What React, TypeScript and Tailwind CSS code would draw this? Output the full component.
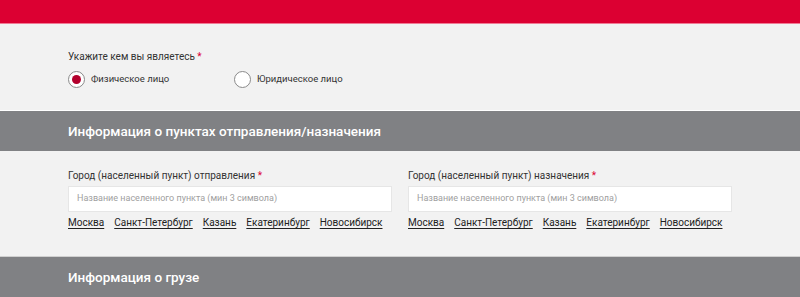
import React from "react";

const cities = ["Москва", "Санкт-Петербург", "Казань", "Екатеринбург", "Новосибирск"];

function CityField({ label }: { label: string }) {
  return (
    <div className="flex flex-col">
      <div className="text-[10px] leading-[14px] text-[#333333]">
        {label} <span className="text-[#dc0032]">*</span>
      </div>
      <div className="mt-[3px] h-[26px] bg-white border border-[#e6e6e6] flex items-center px-[8px]">
        <span className="text-[9px] text-[#a0a0a0] whitespace-nowrap">Название населенного пункта (мин 3 символа)</span>
      </div>
      <div className="mt-[4px] flex gap-[10px] text-[10px] leading-[14px] text-[#222222] whitespace-nowrap">
        {cities.map((c) => (
          <a key={c} className="underline underline-offset-2 cursor-pointer">
            {c}
          </a>
        ))}
      </div>
    </div>
  );
}

export default function App() {
  return (
    <div
      className="w-[800px] h-[297px] overflow-hidden bg-[#f2f2f2]"
      style={{ fontFamily: 'Roboto, "Liberation Sans", sans-serif' }}
    >
      <div className="h-[24px] bg-[#dc0032] border-b border-[#f07a95]" />
      <div className="h-[87px] border-b border-white">
        <div className="w-[664px] mx-auto pt-[26px]">
          <div className="text-[10px] leading-[14px] text-[#333333]">
            Укажите кем вы являетесь <span className="text-[#dc0032]">*</span>
          </div>
          <div className="mt-[7px] flex items-center">
            <label className="flex items-center gap-[6px] w-[166px]">
              <span className="w-[17px] h-[17px] rounded-full bg-white border border-[#8a8a8a] flex items-center justify-center">
                <span className="w-[9px] h-[9px] rounded-full bg-[#b3002d]" />
              </span>
              <span className="text-[9.5px] text-[#333333]">Физическое лицо</span>
            </label>
            <label className="flex items-center gap-[6px]">
              <span className="w-[17px] h-[17px] rounded-full bg-white border border-[#8a8a8a]" />
              <span className="text-[9.5px] text-[#333333]">Юридическое лицо</span>
            </label>
          </div>
        </div>
      </div>
      <div className="h-[40px] bg-[#808184] flex items-center">
        <div className="w-[664px] mx-auto text-[13.5px] font-medium text-white">
          Информация о пунктах отправления/назначения
        </div>
      </div>
      <div className="h-[106px] border-b border-[#d0d0d0]">
        <div className="w-[664px] mx-auto pt-[18px] grid grid-cols-2 gap-[16px]">
          <CityField label="Город (населенный пункт) отправления" />
          <CityField label="Город (населенный пункт) назначения" />
        </div>
      </div>
      <div className="h-[40px] bg-[#808184] flex items-center">
        <div className="w-[664px] mx-auto text-[13.5px] font-medium text-white">Информация о грузе</div>
      </div>
    </div>
  );
}
